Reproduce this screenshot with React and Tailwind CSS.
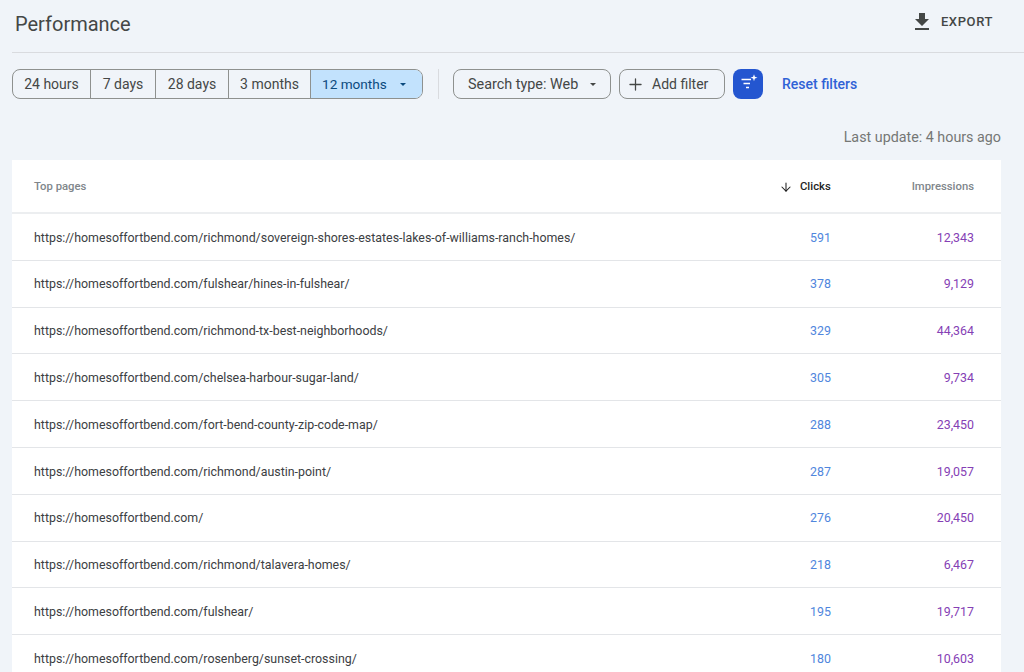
import { ArrowDown, Plus } from 'lucide-react'

const rows = [
  ['https://homesoffortbend.com/richmond/sovereign-shores-estates-lakes-of-williams-ranch-homes/', '591', '12,343'],
  ['https://homesoffortbend.com/fulshear/hines-in-fulshear/', '378', '9,129'],
  ['https://homesoffortbend.com/richmond-tx-best-neighborhoods/', '329', '44,364'],
  ['https://homesoffortbend.com/chelsea-harbour-sugar-land/', '305', '9,734'],
  ['https://homesoffortbend.com/fort-bend-county-zip-code-map/', '288', '23,450'],
  ['https://homesoffortbend.com/richmond/austin-point/', '287', '19,057'],
  ['https://homesoffortbend.com/', '276', '20,450'],
  ['https://homesoffortbend.com/richmond/talavera-homes/', '218', '6,467'],
  ['https://homesoffortbend.com/fulshear/', '195', '19,717'],
  ['https://homesoffortbend.com/rosenberg/sunset-crossing/', '180', '10,603'],
]

const ranges = [
  ['24 hours', 'w-[78px]'],
  ['7 days', 'w-[65px]'],
  ['28 days', 'w-[73px]'],
  ['3 months', 'w-[82px]'],
]

function Caret() {
  return <span className="w-0 h-0 border-x-[3.5px] border-x-transparent border-t-[3.5px] border-t-current" />
}

export default function App() {
  return (
    <div className="w-[1024px] h-[672px] overflow-hidden bg-[#f0f4f9] text-[#444746] font-['Roboto',sans-serif]">
      <header className="h-[53px] ml-3 flex items-center justify-between border-b border-[#d9dbdf]">
        <h1 className="ml-[3px] pb-[5px] text-[20px] text-[#444746]">Performance</h1>
        <button className="flex items-center gap-[7px] mr-[31px] mb-[8px] text-[13px] font-medium tracking-[0.6px]">
          <svg viewBox="0 0 24 24" className="w-[24px] h-[24px] fill-[#444746]">
            <path d="M19 9h-4V3H9v6H5l7 7 7-7zM5 18v2h14v-2H5z" />
          </svg>
          EXPORT
        </button>
      </header>

      <div className="h-[62px] pl-3 flex items-center text-[14px]">
        <div className="h-[30px] flex border border-[#8e918f] rounded-lg overflow-hidden">
          {ranges.map(([label, width]) => (
            <span key={label} className={`${width} flex items-center justify-center border-r border-[#8e918f]`}>{label}</span>
          ))}
          <span className="w-[111px] pl-[11px] flex items-center gap-[13px] bg-[#c2e2fd] text-[#0b4a7e] text-[13.6px]">
            12 months
            <Caret />
          </span>
        </div>
        <div className="w-px h-[30px] bg-[#d9dbdf] ml-[15px]" />
        <button className="ml-[14px] h-[30px] w-[158px] pl-[14px] pt-[1px] flex items-center gap-[12px] border border-[#8e918f] rounded-lg text-[14.4px]">
          Search type: Web
          <Caret />
        </button>
        <button className="ml-2 h-[30px] w-[106px] pl-[6px] flex items-center gap-[7px] border border-[#8e918f] rounded-lg">
          <Plus size={19} strokeWidth={1.6} />
          Add filter
        </button>
        <span className="ml-2 w-[30px] h-[30px] rounded-lg bg-[#2456d0] flex items-center justify-center">
          <svg viewBox="0 0 24 24" className="w-[24px] h-[24px]">
            <path d="M5.5 7.5H15M7.5 11.5H14M10 15.5h3" stroke="white" strokeWidth="1.4" fill="none" />
            <path d="M18 2.2l.9 2.6 2.6.9-2.6.9-.9 2.6-.9-2.6-2.6-.9 2.6-.9z" fill="white" />
          </svg>
        </span>
        <span className="ml-[19px] text-[#2f62d6] font-medium">Reset filters</span>
      </div>

      <div className="h-[45px] pr-[23px] flex items-start justify-end pt-[12px] text-[14.3px] text-[#757775]">
        Last update: 4 hours ago
      </div>

      <main className="ml-3 w-[989px] bg-white">
        <div className="h-[54px] pl-[22px] pr-[27px] pt-[2px] flex items-center border-b-2 border-[#eceef0] text-[11.3px] font-medium text-[#80868b]">
          <span className="flex-1">Top pages</span>
          <span className="w-[52px] flex items-center gap-[7px] text-[#1f1f1f]">
            <ArrowDown size={14} strokeWidth={1.8} className="shrink-0" />
            Clicks
          </span>
          <span className="w-[143px] text-right">Impressions</span>
        </div>
        {rows.map(([url, clicks, impressions]) => (
          <div key={url} className="h-[46.8px] pl-[22px] pr-[27px] pt-[2px] flex items-center border-b border-[#e3e5e8] text-[12.4px]">
            <span className="flex-1 text-[#3c4043]">{url}</span>
            <span className="w-[52px] text-right text-[#5086dd]">{clicks}</span>
            <span className="w-[143px] text-right text-[#8540b5]">{impressions}</span>
          </div>
        ))}
      </main>
    </div>
  )
}
